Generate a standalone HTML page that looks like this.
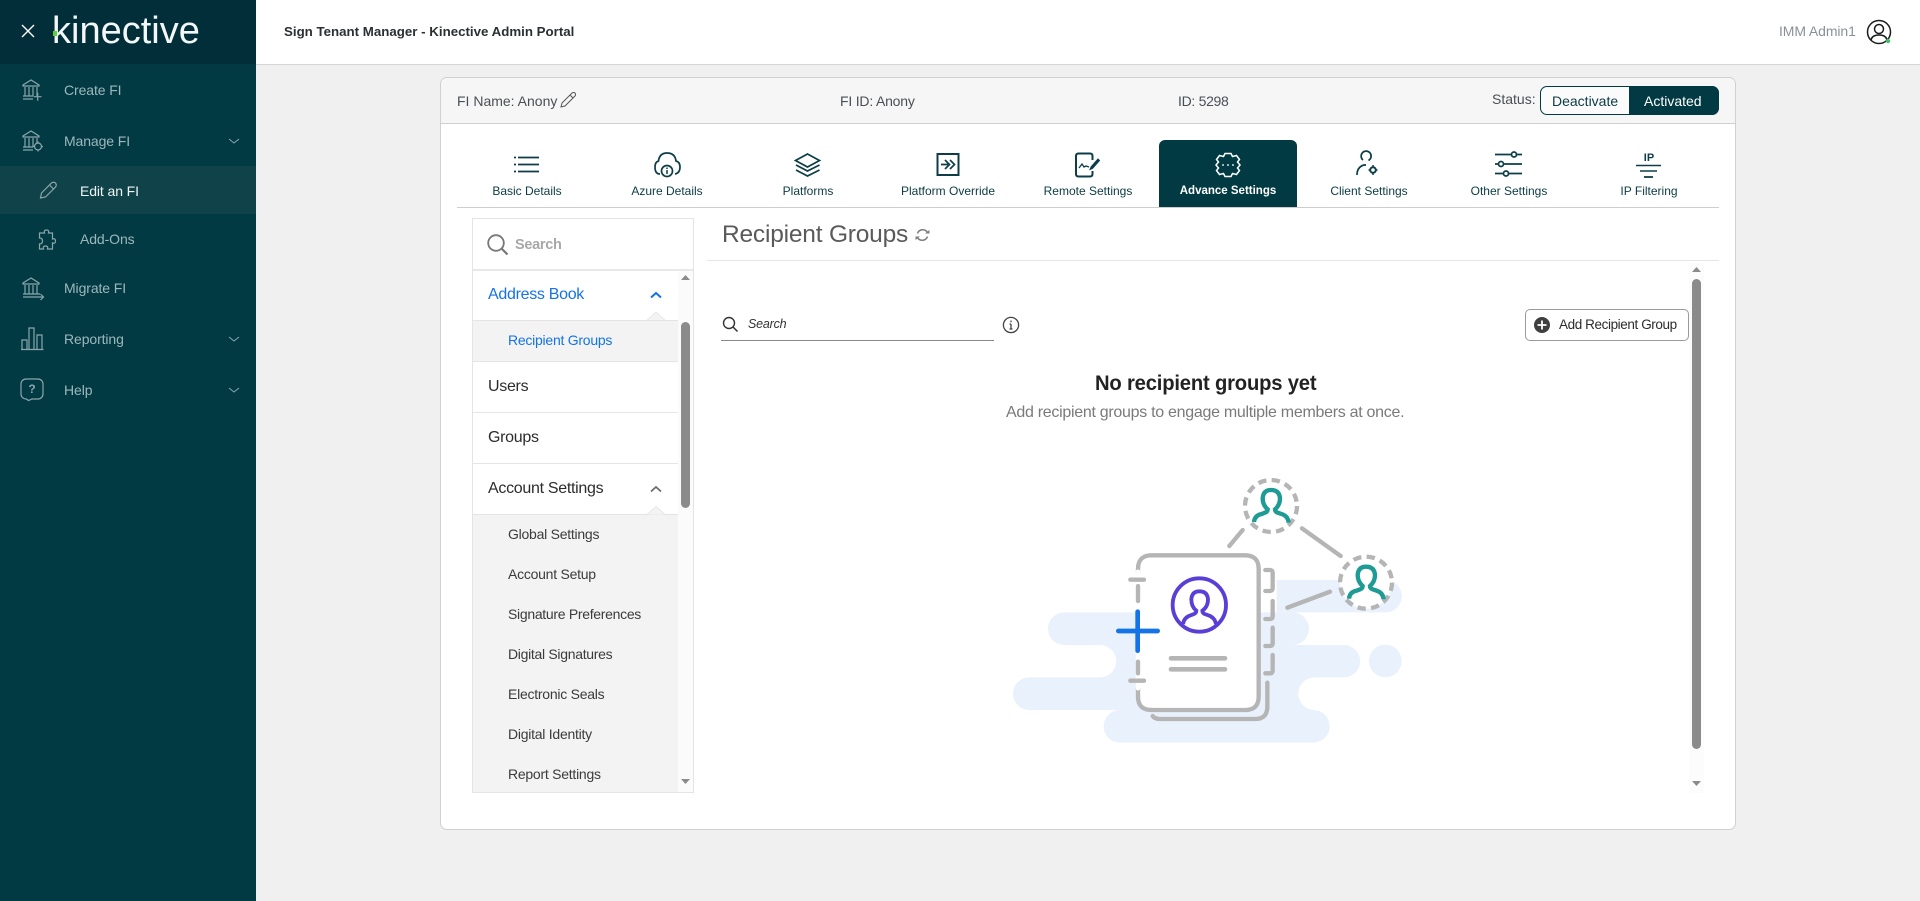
<!DOCTYPE html>
<html lang="en"><head><meta charset="utf-8"><title>Sign Tenant Manager - Kinective Admin Portal</title>
<style>
html,body{margin:0;padding:0;width:1920px;height:901px;overflow:hidden;background:#f0f0f0;font-family:"Liberation Sans",Arial,sans-serif}
.b{position:absolute;box-sizing:border-box}
.t{position:absolute;white-space:nowrap;line-height:20px;height:20px;margin-top:-10px}
.nav{font-size:14px;color:#9db7bc;left:64px;letter-spacing:-.1px}
.tab{font-size:12px;color:#0c3b45;top:191px;transform:translateX(-50%)}
.sub{font-size:14px;color:#3b3b3b;left:508px;letter-spacing:-.25px}
.main{font-size:16px;color:#2c2c2c;left:488px;letter-spacing:-.3px}
svg{position:absolute;left:0;top:0}
</style></head><body>
<div class="b" style="left:0;top:0;width:256px;height:901px;background:#023a43"></div>
<div class="b" style="left:0;top:0;width:256px;height:64px;background:#012e38"></div>
<div class="b" style="left:0;top:166px;width:256px;height:48px;background:#104349"></div>
<div class="b" style="left:256px;top:0;width:1664px;height:65px;background:#fff;border-bottom:1px solid #d6d6d6"></div>

<div class="b" style="left:440px;top:77px;width:1296px;height:753px;background:#fff;border:1px solid #d0d0d0;border-radius:7px"></div>
<div class="b" style="left:441px;top:78px;width:1294px;height:46px;background:#f6f6f6;border-bottom:1px solid #cfcfcf;border-radius:6px 6px 0 0"></div>
<div class="b" style="left:457px;top:207px;width:1262px;height:1px;background:#cdcdcd"></div>
<div class="b" style="left:1159px;top:140px;width:138px;height:67px;background:#023a43;border-radius:6px 6px 0 0"></div>

<div class="b" style="left:1540px;top:86px;width:179px;height:29px;border:1px solid #023a43;border-radius:7px;background:#fbfbfb"></div>
<div class="b" style="left:1629px;top:86px;width:90px;height:29px;background:#023a43;border-radius:0 7px 7px 0"></div>

<div class="b" style="left:472px;top:218px;width:222px;height:575px;background:#fff;border:1px solid #e4e4e4"></div>
<div class="b" style="left:473px;top:269px;width:220px;height:2px;background:#e8e8e8"></div>
<div class="b" style="left:473px;top:320px;width:205px;height:42px;background:#f3f3f3;border-top:1px solid #e4e4e4;border-bottom:1px solid #e4e4e4"></div>
<div class="b" style="left:473px;top:412px;width:205px;height:1px;background:#e6e6e6"></div>
<div class="b" style="left:473px;top:463px;width:205px;height:1px;background:#e6e6e6"></div>
<div class="b" style="left:473px;top:514px;width:205px;height:278px;background:#f3f3f3;border-top:1px solid #e4e4e4"></div>
<div class="b" style="left:678px;top:271px;width:15px;height:521px;background:#fbfbfb"></div>
<div class="b" style="left:681px;top:322px;width:9px;height:186px;background:#8b8b8b;border-radius:5px"></div>

<div class="b" style="left:707px;top:260px;width:1012px;height:1px;background:#e6e6e6"></div>
<div class="b" style="left:721px;top:340px;width:273px;height:1px;background:#8a8a8a"></div>
<div class="b" style="left:1525px;top:309px;width:164px;height:32px;background:#fff;border:1px solid #9a9a9a;border-radius:5px"></div>
<div class="b" style="left:1689px;top:263px;width:15px;height:530px;background:#fcfcfc"></div>
<div class="b" style="left:1692px;top:279px;width:9px;height:470px;background:#8b8b8b;border-radius:5px"></div>

<div class="t" style="left:284px;top:32px;font-size:13.300px;font-weight:bold;color:#2a2f33">Sign Tenant Manager - Kinective Admin Portal</div>
<div class="t" style="left:1779px;top:31px;font-size:14px;color:#8b9098;letter-spacing:-.1px">IMM Admin1</div>

<div class="t" style="left:52px;top:31px;font-size:38px;color:#f4f7f7;letter-spacing:0">kinective</div>
<div class="t nav" style="top:90px">Create FI</div>
<div class="t nav" style="top:141px">Manage FI</div>
<div class="t nav" style="left:80px;top:191px;color:#eef3f4">Edit an FI</div>
<div class="t nav" style="left:80px;top:239px">Add-Ons</div>
<div class="t nav" style="top:288px">Migrate FI</div>
<div class="t nav" style="top:339px">Reporting</div>
<div class="t nav" style="top:390px">Help</div>

<div class="t" style="left:457px;top:101px;font-size:14px;color:#4a4f55">FI Name: Anony</div>
<div class="t" style="left:840px;top:101px;font-size:14px;color:#4a4f55;letter-spacing:-.2px">FI ID: Anony</div>
<div class="t" style="left:1178px;top:101px;font-size:14px;color:#4a4f55;letter-spacing:-.3px">ID: 5298</div>
<div class="t" style="left:1492px;top:99px;font-size:14px;color:#4a4f55">Status:</div>
<div class="t" style="left:1552px;top:101px;font-size:14px;color:#0c3b45">Deactivate</div>
<div class="t" style="left:1644px;top:101px;font-size:14px;color:#fff">Activated</div>

<div class="t tab" style="left:527px">Basic Details</div>
<div class="t tab" style="left:667px">Azure Details</div>
<div class="t tab" style="left:808px">Platforms</div>
<div class="t tab" style="left:948px">Platform Override</div>
<div class="t tab" style="left:1088px">Remote Settings</div>
<div class="t tab" style="left:1228px;color:#fff;font-weight:bold;font-size:11.500px">Advance Settings</div>
<div class="t tab" style="left:1369px">Client Settings</div>
<div class="t tab" style="left:1509px">Other Settings</div>
<div class="t tab" style="left:1649px">IP Filtering</div>

<div class="t" style="left:515px;top:245px;font-size:14.500px;font-weight:bold;color:#a8a8a8;letter-spacing:-.3px">Search</div>
<div class="t main" style="top:295px;color:#1473e6">Address Book</div>
<div class="t sub" style="top:340px;color:#1473e6">Recipient Groups</div>
<div class="t main" style="top:387px">Users</div>
<div class="t main" style="top:438px">Groups</div>
<div class="t main" style="top:489px">Account Settings</div>
<div class="t sub" style="top:534px">Global Settings</div>
<div class="t sub" style="top:574px">Account Setup</div>
<div class="t sub" style="top:614px;letter-spacing:-.3px">Signature Preferences</div>
<div class="t sub" style="top:654px;letter-spacing:-.3px">Digital Signatures</div>
<div class="t sub" style="top:694px">Electronic Seals</div>
<div class="t sub" style="top:734px">Digital Identity</div>
<div class="t sub" style="top:774px">Report Settings</div>

<div class="t" style="left:722px;top:235px;font-size:24.500px;color:#5a5a5a;letter-spacing:-.2px">Recipient Groups</div>
<div class="t" style="left:748px;top:324px;font-size:12.500px;font-style:italic;color:#333;letter-spacing:-.2px">Search</div>
<div class="t" style="left:1559px;top:325px;font-size:13.500px;color:#2c2c2c;letter-spacing:-.4px">Add Recipient Group</div>
<div class="t" style="left:1095px;top:383px;font-size:21.500px;font-weight:bold;color:#222;letter-spacing:-.2px;transform:scaleX(.94);transform-origin:0 50%">No recipient groups yet</div>
<div class="t" style="left:1006px;top:413px;font-size:16px;color:#7a7a7a;letter-spacing:-.29px">Add recipient groups to engage multiple members at once.</div>

<svg width="1920" height="901" viewBox="0 0 1920 901" fill="none">
<!-- logo overlays -->
<rect x="53" y="31" width="4" height="5" fill="#5fd03f"/>
<path d="M22 25l12 12M34 25l-12 12" stroke="#fff" stroke-width="1.400"/>
<!-- side icons -->
<g stroke="#8aa6ab" stroke-width="1.200">
<path d="M23 86h16M31 80l-8 5v1h16v-1zM25 87v9M29 87v9M33 87v9M37 87v9M23 96h10M23 99h10"/>
<path d="M33.500 96.700h8M37.700 92.700v8"/>
<g transform="translate(0,51)"><path d="M23 86h16M31 80l-8 5v1h16v-1zM25 87v9M29 87v9M33 87v9M37 87v5M23 96h10M23 99h10"/><circle cx="38" cy="95.500" r="3.500"/><path d="M38 90.500v1.500M38 99v1.500M33 95.500h1.500M41.500 95.500h1.500"/></g>
<g transform="translate(0,198)"><path d="M23 86h16M31 80l-8 5v1h16v-1zM25 87v9M29 87v9M33 87v9M37 87v9M23 96h17M23 99h20M40.500 96l3 3-3 3"/></g>
<path d="M21 349.500h22.500M22 349v-9h5v9M29 349v-21h5v21M37 349v-14h5v14"/>
<path d="M26 379h12a5 5 0 0 1 5 5v10a5 5 0 0 1-5 5h-6l-3.500 1.500-2-1.500a5 5 0 0 1-5.500-5v-10a5 5 0 0 1 5-5z"/>
<path d="M40.500 198l1-5 10-10q2-1.500 4 0 1.500 2 0 4l-10 10zM49.500 185l4.500 4.500"/>
<path d="M39.500 233h5q-1-3 2-3t2 3h4v6q3-1 3 2t-3 2v6h-5q1-3-2-3t-2 3h-4v-5q3 0 3-3t-3-3z"/>
<path d="M229 139l5 4 5-4M229 337l5 4 5-4M229 388l5 4 5-4" stroke-width="1"/>
</g>
<text x="32" y="393" font-family="Liberation Sans" font-size="12" fill="#8aa6ab" text-anchor="middle" font-weight="bold">?</text>
<!-- avatar -->
<circle cx="1879" cy="32" r="11.500" stroke="#1b1b1b" stroke-width="1.500"/>
<circle cx="1879" cy="29" r="4.500" stroke="#1b1b1b" stroke-width="1.500"/>
<path d="M1871 40q1-5 8-5t8 5" stroke="#1b1b1b" stroke-width="1.500"/>
<circle cx="1888" cy="41" r="2.200" fill="#3fc06a"/>
<!-- header pencil -->
<path d="M561 107l1-4 10-10q2-1 3 0 1 2 0 3l-10 10zM570 95l3 3" stroke="#555" stroke-width="1"/>
<!-- tab icons -->
<g stroke="#0d3e48" stroke-width="1.700">
<path d="M518 157.500h21M518 164.500h21M518 171.500h21M514 157.500h2M514 164.500h2M514 171.500h2"/>
<path d="M660 174Q655 174 655 167Q655 162 658.500 161Q659.500 153 667 153Q675 153 676 161Q680 162 680 167Q680 173 675 174"/>
<circle cx="667" cy="171" r="5.500"/><path d="M667 170v4M667 167.500v1.500" stroke-width="1.500"/>
<path d="M807.500 154l12 6.500-12 6.500-12-6.500zM796 165l11.500 6 12-6M796 170l11.500 6 12-6"/>
<rect x="937.500" y="154" width="21" height="21" stroke-width="2"/>
<path d="M941 164.500h7M945 160l4.500 4.500-4.500 4.500M950 160l4.500 4.500-4.500 4.500"/>
<path d="M1092.500 160v-4q0-2.500-2.500-2.500h-11.500q-2.500 0-2.500 2.500v18q0 2.500 2.500 2.500h11.500q2.500 0 2.500-2.500v-3" stroke-width="2"/>
<path d="M1079 168l3-4 2 3 2-1 3 1" stroke-width="1.300"/>
<path d="M1091 167l7-8 1.500 1.500-7 8-2.500 1z" fill="#0d3e48" stroke-width="1"/>
<path d="M1363 160a5 5 0 1 1 5.500 .5M1357 175q0-8 7-10h2"/>
<circle cx="1373" cy="170" r="2.800" stroke-width="2"/>
<path d="M1373 165v2M1373 173v2M1368.500 170h2M1375.500 170h2" stroke-width="1.500"/>
<path d="M1495 154.500h16M1517 154.500h5M1495 164h3M1504 164h18M1495 173.500h8M1509 173.500h13"/>
<circle cx="1514" cy="154.500" r="2.500"/><circle cx="1501" cy="164" r="2.500"/><circle cx="1506" cy="173.500" r="2.500"/>
<path d="M1636 165.500h25M1640 171h17" stroke-width="1.500"/><path d="M1644 177h9" stroke-width="1.800"/>
</g>
<text x="1649" y="161" font-family="Liberation Sans" font-size="11" font-weight="bold" fill="#0d3e48" text-anchor="middle">IP</text>
<!-- active gear -->
<path d="M1225 153.500h6l1.500 3 4-1 3 4-2 2.500 2.500 3-2.500 3 2 2.500-3 4-4-1-1.500 3h-6l-1.500-3-4 1-3-4 2-2.500-2.500-3 2.500-3-2-2.500 3-4 4 1z" stroke="#fff" stroke-width="1.500"/>
<path d="M1222 165h2M1227 165h2M1232 165h2" stroke="#fff" stroke-width="1.200"/>
<!-- left panel icons -->
<circle cx="496" cy="243" r="7.800" stroke="#777" stroke-width="1.800"/><path d="M502 249l5.500 5.500" stroke="#777" stroke-width="2.200"/>
<path d="M651 297.500l5-4.500 5 4.500" stroke="#1473e6" stroke-width="2"/>
<path d="M651 491.500l5-4.500 5 4.500" stroke="#6e6e6e" stroke-width="1.800"/>
<path d="M647 320l9-8 9 8" fill="#f3f3f3" stroke="#e8e8e8"/>
<path d="M647 514.500l9-8 9 8" fill="#f3f3f3" stroke="#e8e8e8"/>
<path d="M681 280l4.500-5 4.500 5zM681 779h9l-4.500 5z" fill="#8b8b8b"/>
<path d="M1692 272l4.500-5 4.500 5zM1692 781h9l-4.500 5z" fill="#8b8b8b"/>
<!-- main icons -->
<path d="M917.500 233.500A5.500 5.500 0 0 1 927.500 232.500M927.500 236.500A5.500 5.500 0 0 1 917.500 237.500" stroke="#7c7c7c" stroke-width="1.500"/>
<path d="M925 233.500h4.500v-3.500zM920 236.500h-4.500v3.500z" fill="#7c7c7c"/>
<circle cx="729" cy="323" r="5.500" stroke="#333" stroke-width="1.400"/><path d="M733 327l4.500 4.500" stroke="#333" stroke-width="1.500"/>
<circle cx="1011" cy="325" r="7.600" stroke="#444" stroke-width="1.300"/><path d="M1011 324v5M1009.500 329h3M1009.500 324h1.500M1011 320.500v1.700" stroke="#444" stroke-width="1.300"/>
<circle cx="1542" cy="325" r="8" fill="#3f3f3f"/><path d="M1537.500 325h9M1542 320.500v9" stroke="#fff" stroke-width="1.800"/>
</svg>

<svg style="left:1000px;top:460px" width="420" height="300" viewBox="0 0 1260 900" fill="none" stroke-linecap="round">
<g fill="#e9f1fc">
<path d="M830 360H1157a48.500 48.500 0 0 1 0 97H830z"/>
<path d="M193 457H878a49 49 0 0 1 0 98H1032a48.500 48.500 0 0 1 0 97H948a49 49 0 0 0-8 98a49 49 0 0 1 0 98H360a49 49 0 0 1 0-98H88a49 49 0 0 1 0-98H300a48.500 48.500 0 0 0 0-97H193a49 49 0 0 1 0-98z"/>
<circle cx="1156" cy="603" r="49"/>
</g>
<g stroke="#b5b5b5" stroke-width="13">
<path d="M802 668V740Q802 777 765 777H480Q464 777 458 768"/>
<path d="M414 335V327Q414 286 455 286H735Q776 286 776 327V710Q776 750 735 750H455Q414 750 414 710V685" fill="#fff"/>
<path d="M414 335V685" stroke="#fff"/>
<path d="M414 378V423M414 605V640M391 359H432M391 662H432"/>
<path d="M796 330h14q8 0 8 8v46q0 8-8 9h-14M796 477h14q8 0 8-8V423M796 558h14q8 0 8-8V503M796 640h14q8 0 8-8V585"/>
<path d="M688 258L728 210M906 205L1022 288M862 443L990 395"/>
<path d="M513 595H675M513 628H675" stroke-width="14"/>
<circle cx="813" cy="138" r="78" stroke-dasharray="25 16" stroke-linecap="butt"/>
<circle cx="1098" cy="368" r="78" stroke-dasharray="25 16" stroke-linecap="butt" fill="#fff"/>
</g>
<g stroke="#1d9b94" stroke-width="13" stroke-linecap="butt">
<path d="M762 186Q764 166 785 162L795 158Q803 155 803 148Q788 135 788 115Q790 90 813 90Q838 90 840 115Q840 135 825 148Q825 155 833 158L845 162Q864 168 866 188"/>
<path d="M1047 416Q1049 396 1070 392L1080 388Q1088 385 1088 378Q1073 365 1073 345Q1075 320 1098 320Q1123 320 1125 345Q1125 365 1110 378Q1110 385 1118 388L1130 392Q1149 398 1151 418"/>
</g>
<g stroke="#5a3fd6" stroke-width="11.500">
<circle cx="598" cy="435" r="80"/>
<path d="M549 492Q552 472 572 466L582 462Q589 459 589 452Q574 440 574 418Q576 394 598 394Q622 394 624 418Q624 440 607 452Q607 459 614 462L625 466Q644 472 648 492" stroke-linecap="butt"/>
</g>
<path d="M355 513H473M413 455V572" stroke="#1473e6" stroke-width="14"/>
</svg>
</body></html>
